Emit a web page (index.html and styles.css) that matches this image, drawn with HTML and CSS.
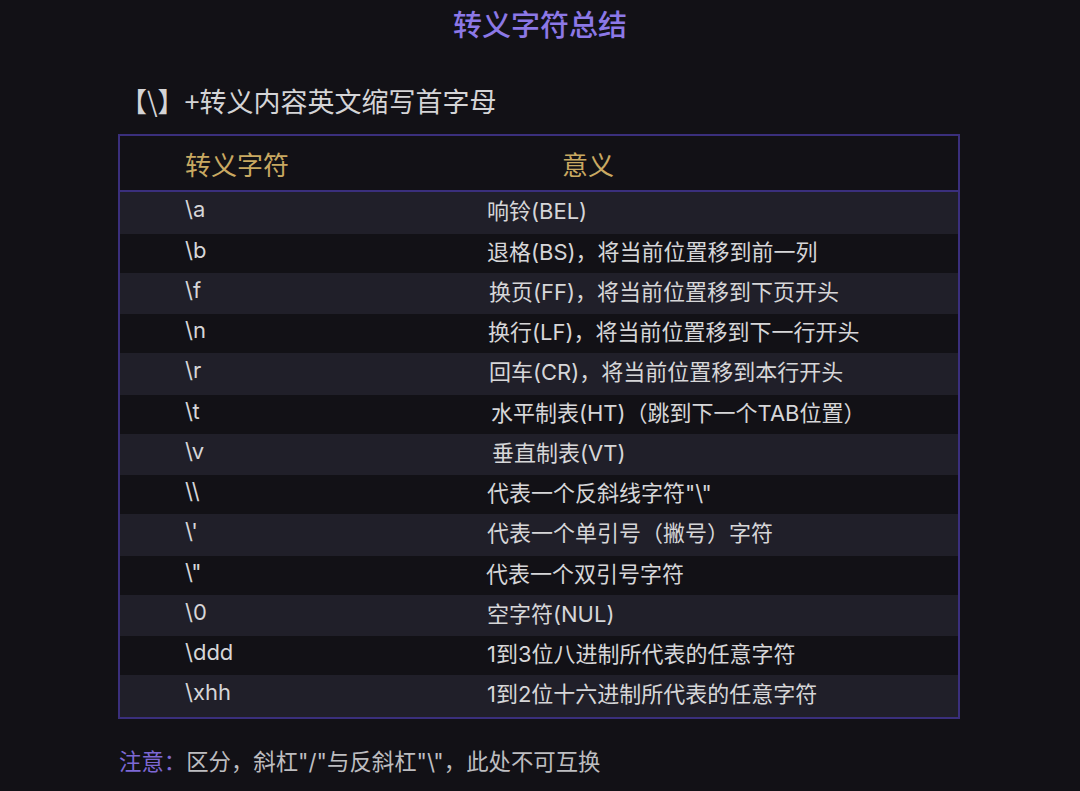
FILE: index.html
```html
<!DOCTYPE html>
<html lang="zh-CN">
<head>
<meta charset="utf-8">
<title>转义字符总结</title>
<link rel="stylesheet" href="styles.css">
</head>
<body>
<div class="page">
  <h1 class="title">转义字符总结</h1>
  <h2 class="subtitle">【\】+转义内容英文缩写首字母</h2>
  <div class="table">
    <div class="head">
      <div class="c1">转义字符</div>
      <div class="c2">意义</div>
    </div>
    <div class="row"><div class="c1">\a</div><div class="c2">响铃(BEL)</div></div>
    <div class="row"><div class="c1">\b</div><div class="c2">退格(BS)，将当前位置移到前一列</div></div>
    <div class="row"><div class="c1">\f</div><div class="c2 s2">换页(FF)，将当前位置移到下页开头</div></div>
    <div class="row"><div class="c1">\n</div><div class="c2 s1">换行(LF)，将当前位置移到下一行开头</div></div>
    <div class="row"><div class="c1">\r</div><div class="c2 s2">回车(CR)，将当前位置移到本行开头</div></div>
    <div class="row"><div class="c1">\t</div><div class="c2 s4">水平制表(HT)（跳到下一个TAB位置）</div></div>
    <div class="row"><div class="c1">\v</div><div class="c2 s5">垂直制表(VT)</div></div>
    <div class="row"><div class="c1">\\</div><div class="c2">代表一个反斜线字符"\"</div></div>
    <div class="row"><div class="c1">\'</div><div class="c2">代表一个单引号（撇号）字符</div></div>
    <div class="row"><div class="c1">\"</div><div class="c2 sm1">代表一个双引号字符</div></div>
    <div class="row"><div class="c1">\0</div><div class="c2">空字符(NUL)</div></div>
    <div class="row"><div class="c1">\ddd</div><div class="c2">1到3位八进制所代表的任意字符</div></div>
    <div class="row"><div class="c1">\xhh</div><div class="c2">1到2位十六进制所代表的任意字符</div></div>
  </div>
  <p class="note"><span class="note-label">注意：</span>区分，斜杠"/"与反斜杠"\"，此处不可互换</p>
</div>
</body>
</html>
```

FILE: styles.css
```css
html, body {
  margin: 0;
  padding: 0;
  background: #121116;
}
body {
  font-family: "Inter", "Noto Sans CJK SC", sans-serif;
  color: #d6d6d8;
}
.page {
  width: 1080px;
  height: 791px;
  overflow: hidden;
  display: flex;
  flex-direction: column;
}
.title {
  margin: 6px 0 0;
  height: 40px;
  line-height: 40px;
  text-align: center;
  font-size: 29px;
  font-weight: 500;
  color: #8c78e6;
}
.subtitle {
  margin: 30px 0 0 120px;
  height: 50px;
  line-height: 50px;
  font-size: 27px;
  font-weight: 400;
  color: #d4d4d6;
  font-family: "Noto Sans CJK SC", sans-serif;
}
.table {
  margin: 8px 0 0 118px;
  width: 842px;
  border: 2px solid #3a2f7c;
  box-sizing: border-box;
  display: flex;
  flex-direction: column;
}
.head {
  display: flex;
  align-items: center;
  height: 54px;
  border-bottom: 2px solid #3a2f7c;
  color: #c9a962;
  font-size: 26px;
  font-family: "Noto Sans CJK SC", sans-serif;
}
.head .c1 { width: 377px; padding-left: 65px; box-sizing: border-box; }
.head .c2 { padding-left: 65px; }
.row {
  display: flex;
  align-items: center;
  font-size: 22px;
  height: 39px;
  padding-bottom: 7px;
  box-sizing: border-box;
  background: #121116;
}
.row:nth-child(even) {
  background: #201f29;
  height: 41.5px;
}
.row .c1 {
  width: 367px;
  padding-left: 65px;
  box-sizing: border-box;
}
.row .c2 { white-space: nowrap; }
.row .s1 { margin-left: 1px; }
.row .s2 { margin-left: 2px; }
.row .s4 { margin-left: 4px; }
.row .s5 { margin-left: 5px; }
.row .sm1 { margin-left: -1px; }
.note {
  margin: 27px 0 0 119px;
  font-size: 22.4px;
  line-height: 32px;
  color: #bdbdc0;
}
.note-label { color: #7d68d4; }
```
